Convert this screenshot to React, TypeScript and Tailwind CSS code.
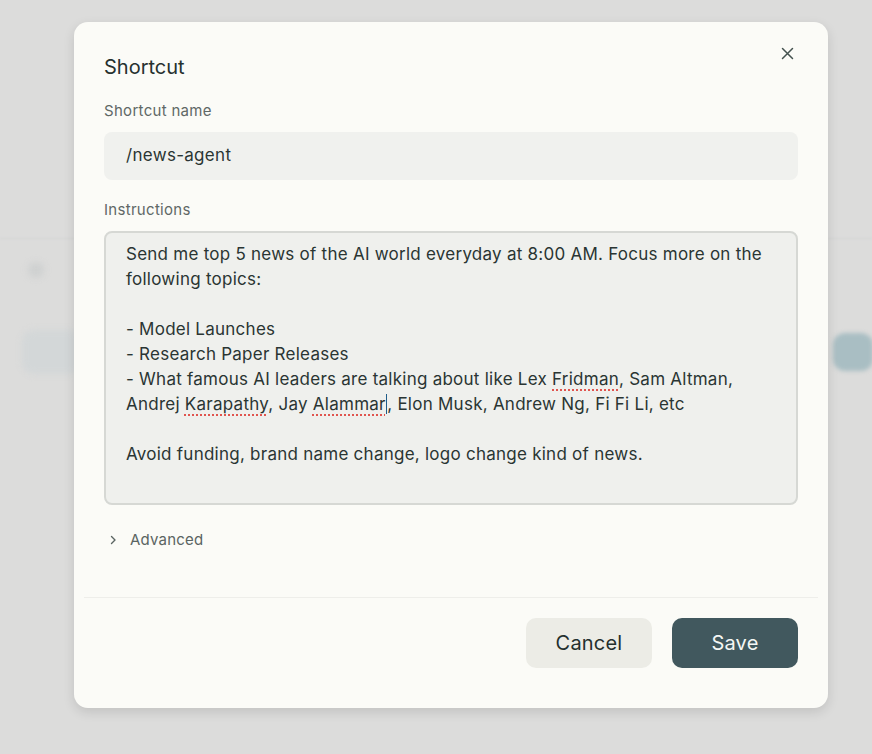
import React from "react";

const Misspelled = ({ children }: { children: React.ReactNode }) => (
  <span className="underline decoration-dotted decoration-[#e0554f] decoration-[1.5px] underline-offset-[4px]">
    {children}
  </span>
);

const App = () => {
  return (
    <div
      className="relative w-full h-[754px] overflow-hidden bg-[#dcdcdb]"
      style={{ fontFamily: "Inter, 'Noto Sans', sans-serif" }}
    >
      {/* blurred page behind the overlay */}
      <div className="absolute left-0 right-0 top-[238px] h-px bg-[#d3d4d3] blur-[1px]" />
      <div className="absolute left-[28px] top-[262px] w-[16px] h-[16px] rounded-full bg-[#cfd1d1] blur-[3px]" />
      <div className="absolute left-[22px] top-[330px] w-[60px] h-[44px] rounded-xl bg-[#d3d7d8] blur-[3px]" />
      <div className="absolute left-[833px] top-[333px] w-[40px] h-[38px] rounded-xl bg-[#a9bec3] blur-[2px]" />

      <div className="relative pt-[22px] pl-[74px]">
        <div className="w-[754px] h-[686px] rounded-[14px] bg-[#fbfbf7] shadow-[0_4px_12px_rgba(0,0,0,0.12)] flex flex-col">
          <div className="relative px-[30px] pt-[31px]">
            <button className="absolute right-[33px] top-[23px] w-[16px] h-[16px] flex items-center justify-center text-[#44524f]">
              <svg width="13" height="13" viewBox="0 0 13 13" fill="none" stroke="currentColor" strokeWidth="1.5" strokeLinecap="round">
                <path d="M1.5 1.5 L11.5 11.5 M11.5 1.5 L1.5 11.5" />
              </svg>
            </button>
            <h2 className="text-[20px] leading-[28px] text-[#26312f]">Shortcut</h2>

            <div className="mt-[20px] text-[15px] leading-[20px] tracking-[0.3px] text-[#5f6866]">Shortcut name</div>
            <div className="mt-[11px] h-[48px] rounded-[8px] bg-[#f0f1ee] flex items-center px-[22px] text-[17px] tracking-[0.3px] text-[#2a3533]">
              /news-agent
            </div>

            <div className="mt-[20px] text-[15px] leading-[20px] tracking-[0.3px] text-[#5f6866]">Instructions</div>
            <div className="mt-[11px] h-[274px] rounded-[8px] border-2 border-[#d6d8d4] bg-[#eff0ed] px-[20px] pt-[9px] text-[17px] leading-[25px] tracking-[0.25px] text-[#2a3533] whitespace-pre-wrap">
              {"Send me top 5 news of the AI world everyday at 8:00 AM. Focus more on the following topics:\n\n- Model Launches\n- Research Paper Releases\n- What famous AI leaders are talking about like Lex "}
              <Misspelled>Fridman</Misspelled>
              {", Sam Altman, Andrej "}
              <Misspelled>Karapathy</Misspelled>
              {", Jay "}
              <Misspelled>Alammar</Misspelled>
              <span className="inline-block w-[1.5px] h-[20px] align-[-4px] bg-[#1f5d8a]" />
              {", Elon Musk, Andrew Ng, Fi Fi Li, etc\n\nAvoid funding, brand name change, logo change kind of news."}
            </div>

            <div className="mt-[24px] flex items-center gap-[12px] pl-[4px] text-[15px] tracking-[0.2px] text-[#5a6462]">
              <svg width="10" height="10" viewBox="0 0 10 10" fill="none" stroke="currentColor" strokeWidth="1.4" strokeLinecap="round" strokeLinejoin="round">
                <path d="M3.5 1.5 L7 5 L3.5 8.5" />
              </svg>
              <span>Advanced</span>
            </div>
          </div>

          <div className="mt-[45px] mx-[10px] h-px bg-[#eeeeea]" />

          <div className="flex justify-end gap-[20px] px-[30px] pt-[20px]">
            <button className="w-[126px] h-[50px] rounded-[10px] bg-[#ecece6] text-[20px] tracking-[0.2px] text-[#24302e]">
              Cancel
            </button>
            <button className="w-[126px] h-[50px] rounded-[10px] bg-[#41585e] text-[20px] tracking-[0.2px] text-[#f4f6f4]">
              Save
            </button>
          </div>
        </div>
      </div>
    </div>
  );
};

export default App;
